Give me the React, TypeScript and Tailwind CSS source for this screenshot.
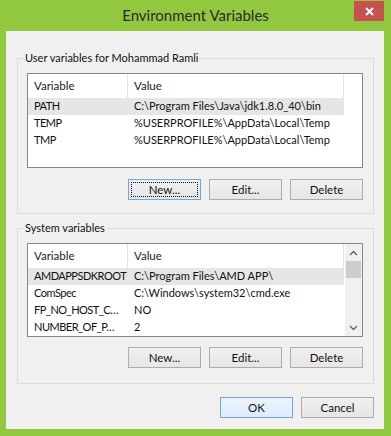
import React from "react";

const font = { fontFamily: 'Lato, "Noto Sans", sans-serif' };

function Btn({ label, kind }: { label: string; kind?: "focus" | "default" }) {
  const base =
    "relative flex h-[21px] w-[73px] items-center justify-center border text-[11.5px] leading-none text-[#111]";
  if (kind === "default") {
    return (
      <div className={base + " border-[#6fa8dc] bg-gradient-to-b from-[#ecf4fc] to-[#dcecfc]"}>
        {label}
      </div>
    );
  }
  if (kind === "focus") {
    return (
      <div className={base + " border-[#6fa8dc] bg-gradient-to-b from-[#f0f0f0] to-[#e5e5e5]"}>
        <div className="absolute inset-[2px] border border-dotted border-[#111]" />
        {label}
      </div>
    );
  }
  return (
    <div className={base + " border-[#acacac] bg-gradient-to-b from-[#f0f0f0] to-[#e5e5e5]"}>
      {label}
    </div>
  );
}

type Row = [string, string];

function ListView({
  rows,
  height,
  scroll,
}: {
  rows: Row[];
  height: string;
  scroll?: boolean;
}) {
  return (
    <div className={"flex w-[336px] overflow-hidden border border-[#828790] bg-white " + height}>
      <div className="flex w-[317px] flex-col">
        <div className="flex h-[24px] shrink-0 items-center text-[11.5px] text-[#222]">
          <div className="flex h-full w-[100px] items-center border-r border-[#e5e5e5] pl-[6px]">Variable</div>
          <div className="flex h-full w-[216px] items-center border-r border-[#e5e5e5] pl-[6px]">Value</div>
        </div>
        {rows.map((r, i) => (
          <div
            key={i}
            className={
              "flex h-[17px] w-[316px] shrink-0 items-center text-[11px] text-[#111] " +
              (i === 0 ? "bg-[#e6e6e6]" : "")
            }
          >
            <div className="w-[100px] overflow-hidden whitespace-nowrap pl-[6px] tracking-[-0.5px]">{r[0]}</div>
            <div className="w-[216px] overflow-hidden whitespace-nowrap pl-[6px]">{r[1]}</div>
          </div>
        ))}
      </div>
      {scroll ? (
        <div className="flex w-[17px] flex-col bg-[#f0f0f0]">
          <div className="flex h-[17px] items-center justify-center">
            <svg width="9" height="6" viewBox="0 0 9 6">
              <path d="M1 5 L4.5 1.5 L8 5" fill="none" stroke="#606060" strokeWidth="1.3" />
            </svg>
          </div>
          <div className="mx-[1px] h-[17px] bg-[#cdcdcd]" />
          <div className="flex-1" />
          <div className="flex h-[17px] items-center justify-center">
            <svg width="9" height="6" viewBox="0 0 9 6">
              <path d="M1 1 L4.5 4.5 L8 1" fill="none" stroke="#606060" strokeWidth="1.3" />
            </svg>
          </div>
        </div>
      ) : (
        <div className="flex w-[17px] flex-col">
          <div className="h-[24px]" />
        </div>
      )}
    </div>
  );
}

function Group({
  label,
  children,
  className,
}: {
  label: string;
  children: React.ReactNode;
  className?: string;
}) {
  return (
    <div className={"relative w-[357px] border border-[#dcdcdc] " + (className || "")}>
      <span className="absolute left-[6px] top-[-9px] bg-[#f0f0f0] px-[1px] text-[11px] leading-[16px] text-[#111]">
        {label}
      </span>
      {children}
    </div>
  );
}

export default function App() {
  return (
    <div className="flex h-[436px] w-[391px] flex-col bg-[#92c83e]" style={font}>
      <div className="relative flex h-[31px] shrink-0 items-center justify-center">
        <span className="text-[15px] text-[#2a2a2a]">Environment Variables</span>
        <div className="absolute right-[7px] top-[1px] flex h-[20px] w-[30px] items-center justify-center bg-[#c75050]">
          <svg width="9" height="9" viewBox="0 0 9 9">
            <path d="M1 1 L8 8 M8 1 L1 8" stroke="white" strokeWidth="2" />
          </svg>
        </div>
      </div>
      <div className="ml-[6px] mr-[7px] h-[398px] bg-[#f0f0f0] pl-[11px] pt-[27px]">
        <Group label="User variables for Mohammad Ramli" className="pb-[13px] pl-[9px] pt-[14px]">
          <ListView
            height="h-[95px]"
            rows={[
              ["PATH", "C:\\Program Files\\Java\\jdk1.8.0_40\\bin"],
              ["TEMP", "%USERPROFILE%\\AppData\\Local\\Temp"],
              ["TMP", "%USERPROFILE%\\AppData\\Local\\Temp"],
            ]}
          />
          <div className="mt-[11px] flex justify-end gap-[8px] pr-[10px]">
            <Btn label="New..." kind="focus" />
            <Btn label="Edit..." />
            <Btn label="Delete" />
          </div>
        </Group>
        <Group label="System variables" className="mt-[14px] pb-[15px] pl-[9px] pt-[14px]">
          <ListView
            height="h-[94px]"
            scroll
            rows={[
              ["AMDAPPSDKROOT", "C:\\Program Files\\AMD APP\\"],
              ["ComSpec", "C:\\Windows\\system32\\cmd.exe"],
              ["FP_NO_HOST_C…", "NO"],
              ["NUMBER_OF_P…", "2"],
            ]}
          />
          <div className="mt-[10px] flex justify-end gap-[8px] pr-[10px]">
            <Btn label="New..." />
            <Btn label="Edit..." />
            <Btn label="Delete" />
          </div>
        </Group>
        <div className="mt-[13px] flex w-[357px] justify-end gap-[8px]">
          <Btn label="OK" kind="default" />
          <Btn label="Cancel" />
        </div>
      </div>
    </div>
  );
}
